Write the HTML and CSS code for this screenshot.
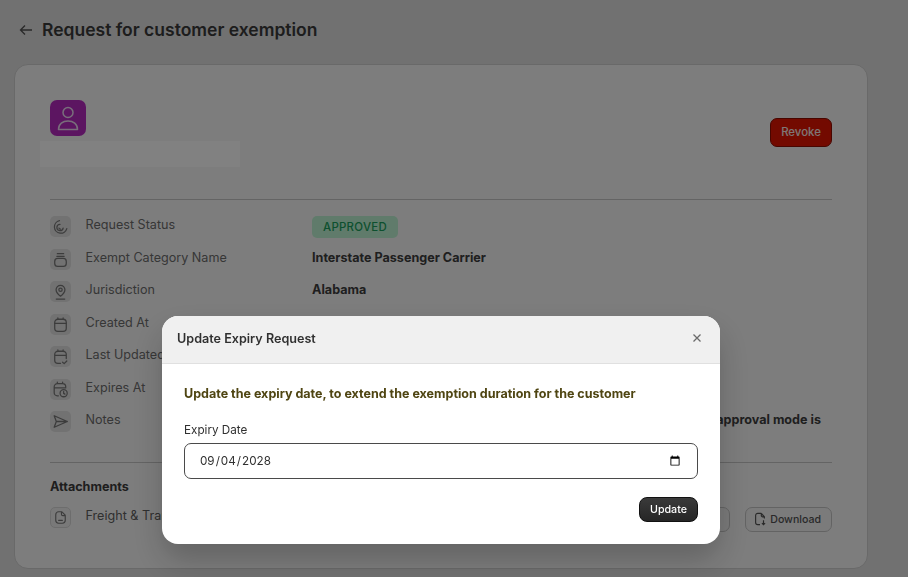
FILE: index.html
```html
<!DOCTYPE html>
<html lang="en">
<head>
<meta charset="utf-8">
<title>Request for customer exemption</title>
<link rel="stylesheet" href="styles.css">
</head>
<body>
<main class="page">
  <header class="page-head">
    <svg class="back" viewBox="0 0 14 14" width="14" height="14"><path d="M13 7H1.500M6 2.500 1.500 7 6 11.500" fill="none" stroke="currentColor" stroke-width="1.300"/></svg>
    <h1>Request for customer exemption</h1>
  </header>
  <section class="card">
    <div class="top">
      <div class="identity">
        <div class="avatar">
          <svg viewBox="0 0 36 36" width="36" height="36"><circle cx="18" cy="12.500" r="5" fill="none" stroke="#e8d4ec" stroke-width="1.500"/><path d="M8.500 29.500c0-5.500 4.300-8.500 9.500-8.500s9.500 3 9.500 8.500z" fill="none" stroke="#e8d4ec" stroke-width="1.500" stroke-linejoin="round"/></svg>
        </div>
        <div class="masked"></div>
      </div>
      <button class="revoke">Revoke</button>
    </div>
    <dl class="rows">
      <div class="row">
        <span class="ico"><svg viewBox="0 0 20 20"><path d="M9 4.500a6 6 0 1 0 7 7.500M9.500 8a3 3 0 1 0 3 3.500M8.500 11.500a1.500 1.500 0 0 0 1.500 1"/></svg></span>
        <dt>Request Status</dt>
        <dd><span class="badge">APPROVED</span></dd>
      </div>
      <div class="row">
        <span class="ico"><svg viewBox="0 0 20 20"><path d="M7 4.500h6M6.500 7h7"/><rect x="4.500" y="9" width="11" height="7.500" rx="2.800"/></svg></span>
        <dt>Exempt Category Name</dt>
        <dd class="strong">Interstate Passenger Carrier</dd>
      </div>
      <div class="row">
        <span class="ico"><svg viewBox="0 0 20 20"><path d="M10 14.500c-2.500-2-4.200-4-4.200-6.200a4.200 4.200 0 0 1 8.400 0c0 2.200-1.700 4.200-4.200 6.200z"/><circle cx="10" cy="8.300" r="1.600"/><path d="M6 17.200h8"/></svg></span>
        <dt>Jurisdiction</dt>
        <dd class="strong">Alabama</dd>
      </div>
      <div class="row">
        <span class="ico"><svg viewBox="0 0 20 20"><rect x="4.500" y="5" width="11" height="11.500" rx="3"/><path d="M4.500 9h11M7.500 3.800V5M12.500 3.800V5"/></svg></span>
        <dt>Created At</dt>
      </div>
      <div class="row">
        <span class="ico"><svg viewBox="0 0 20 20"><path d="M10 16.500H7.500a3 3 0 0 1-3-3V8a3 3 0 0 1 3-3h5a3 3 0 0 1 3 3v4M4.500 9h11M7.500 3.800V5M12.500 3.800V5M12 15.500l1.500 1.300 2.500-2.500"/></svg></span>
        <dt>Last Updated At</dt>
      </div>
      <div class="row">
        <span class="ico"><svg viewBox="0 0 20 20"><path d="M8 16H7a3 3 0 0 1-3-3V7.500a3 3 0 0 1 3-3h5a3 3 0 0 1 3 3M4 8.500h11M7 3v1.500M12 3v1.500"/><circle cx="13" cy="13.500" r="3.400"/><path d="M13 11.800v1.900l1.200.7"/></svg></span>
        <dt>Expires At</dt>
      </div>
      <div class="row">
        <span class="ico"><svg viewBox="0 0 20 20"><path d="M4 4.500 16.500 10 4 15.500 6 10zM6 10h10.500"/></svg></span>
        <dt>Notes</dt>
        <dd class="strong note">Request approved automatically, as the approval mode is</dd>
      </div>
    </dl>
    <div class="attachments">
      <h2>Attachments</h2>
      <div class="attachment">
        <span class="ico ico-outline"><svg viewBox="0 0 20 20"><path d="M11.500 4H8a3 3 0 0 0-3 3v6a3 3 0 0 0 3 3h4a3 3 0 0 0 3-3V7.500zM11 4v2.500a1.500 1.500 0 0 0 1.500 1.500H15M8 13h4"/></svg></span>
        <span class="file">Freight &amp; Transport</span>
        <div class="actions">
          <button class="ghost preview">View</button>
          <button class="ghost"><svg viewBox="0 0 16 16" width="14" height="16"><path d="M9.500 1.500H5.500A2.500 2.500 0 0 0 3 4v8a2.500 2.500 0 0 0 2.500 2.500H8M9.500 1.500 13 5.500v2M9.500 1.500v2.500A1.500 1.500 0 0 0 11 5.500h2M12 9.500v5M10.200 12.800 12 14.600l1.800-1.800" fill="none" stroke="currentColor" stroke-width="1.300"/></svg>Download</button>
        </div>
      </div>
    </div>
  </section>
</main>
<div class="overlay">
  <div class="modal" role="dialog">
    <div class="modal-head">
      <h3>Update Expiry Request</h3>
      <svg class="close" viewBox="0 0 10 10" width="10" height="10"><path d="M1.500 1.500l7 7M8.500 1.500l-7 7" fill="none" stroke="currentColor" stroke-width="1.300"/></svg>
    </div>
    <div class="modal-body">
      <p class="lead">Update the expiry date, to extend the exemption duration for the customer</p>
      <label class="field">Expiry Date
        <input type="date" value="2028-09-04">
      </label>
      <div class="modal-foot"><button class="primary">Update</button></div>
    </div>
  </div>
</div>
</body>
</html>
```
FILE: styles.css
```css
* { box-sizing: border-box; }
html, body { margin: 0; height: 100%; overflow: hidden; }
body { background: #d8d8d8; font-family: Inter, "Liberation Sans", sans-serif; color: #404040; font-size: 12.600px; }
button { font-family: inherit; }
.page { padding: 0 40px 0 14px; }
.page-head { height: 64px; display: flex; align-items: center; gap: 9px; padding: 0 0 5px 5px; }
.back { color: #505050; }
.page-head h1 { margin: 0; font-size: 17.500px; line-height: 24px; font-weight: 640; color: #383838; }
.card { height: 505px; background: #f0f0f0; border: 1px solid #cacaca; border-radius: 14px; padding: 35px 35px 0; }
.top { height: 100px; display: flex; justify-content: space-between; align-items: flex-start; border-bottom: 1px solid #c0c0c0; }
.identity { position: relative; }
.avatar { width: 36px; height: 36px; background: #b02abb; border-radius: 7px; }
.avatar svg { display: block; }
.masked { width: 200px; height: 26px; margin: 5px 0 0 -10px; background: #f8f8f8; }
.revoke { margin-top: 18px; width: 62px; height: 29px; padding: 0 0 1px; background: #dc1400; border: 1px solid #8a0c00; border-radius: 7px; color: #f2e4e2; font-size: 11.400px; font-weight: 500; }
.rows { margin: 16px 0 0; }
.row { display: flex; align-items: flex-start; height: 32.500px; }
.ico { flex: none; width: 21px; height: 21px; background: #dadada; border-radius: 5px; display: flex; align-items: center; justify-content: center; margin-right: 14.500px; }
.ico svg { width: 21px; height: 21px; fill: none; stroke: #747474; stroke-width: 1.200; stroke-linecap: round; stroke-linejoin: round; }
.ico-outline { background: #e8e8e8; border: 1px solid #d2d2d2; }
.ico-outline svg { width: 19px; height: 19px; }
dt { width: 226.500px; flex: none; color: #6a6a6a; line-height: 18px; }
dd { margin: 0; line-height: 18px; flex: 1; }
.strong { font-weight: 650; color: #3c3c3c; }
.note { white-space: nowrap; text-align: right; padding-right: 11px; }
.badge { display: inline-block; width: 86px; height: 22px; line-height: 22px; text-align: center; background: #b8eccd; color: #1a9a5a; border-radius: 5px; font-size: 11.400px; font-weight: 550; letter-spacing: .3px; }
.attachments { margin-top: 18px; border-top: 1px solid #c0c0c0; padding-top: 16px; }
.attachments h2 { margin: 0; font-size: 12.600px; line-height: 16px; font-weight: 650; color: #3a3a3a; }
.attachment { display: flex; align-items: flex-start; margin-top: 12px; }
.file { color: #5c5c5c; line-height: 18px; }
.actions { margin-left: auto; display: flex; gap: 15px; }
.ghost { height: 25px; display: flex; align-items: center; gap: 3px; padding: 0 10px 0 7px; background: #ebebeb; border: 1px solid #bfbfbf; border-radius: 7px; color: #505050; font-size: 10.600px; font-weight: 500; }
.preview { width: 60px; }
.overlay { position: fixed; inset: 0; background: rgba(0,0,0,.48); display: flex; justify-content: center; align-items: flex-end; padding: 0 26px 33px 0; }
.modal { width: 558px; height: 228px; background: #fff; border-radius: 16px; overflow: hidden; box-shadow: 0 16px 32px rgba(0,0,0,.22); }
.modal-head { height: 48px; background: #f0f0f0; border-bottom: 1px solid #e0e0e0; display: flex; align-items: center; justify-content: space-between; padding: 0 18px 3px 15px; }
.modal-head h3 { margin: 0; font-size: 12.600px; font-weight: 600; color: #303030; }
.close { color: #6a6a6a; }
.modal-body { padding: 22px 22px 0; }
.lead { margin: 0; font-size: 12.520px; line-height: 16px; font-weight: 650; color: #4f4512; }
.field { display: block; margin-top: 20px; font-size: 11.700px; line-height: 16px; color: #303030; }
.field input { display: block; width: 100%; height: 36px; margin-top: 5px; padding: 0 14px; background: #fff; border: 1px solid #4a4a4a; border-radius: 7px; font-family: inherit; font-size: 11.700px; color: #303030; }
.modal-foot { display: flex; justify-content: flex-end; margin-top: 18px; }
.primary { width: 59px; height: 25px; padding: 0; background: linear-gradient(#3a3a3a, #262626); border: 1px solid #111; border-radius: 8px; color: #fff; font-size: 10.700px; font-weight: 550; }
```
